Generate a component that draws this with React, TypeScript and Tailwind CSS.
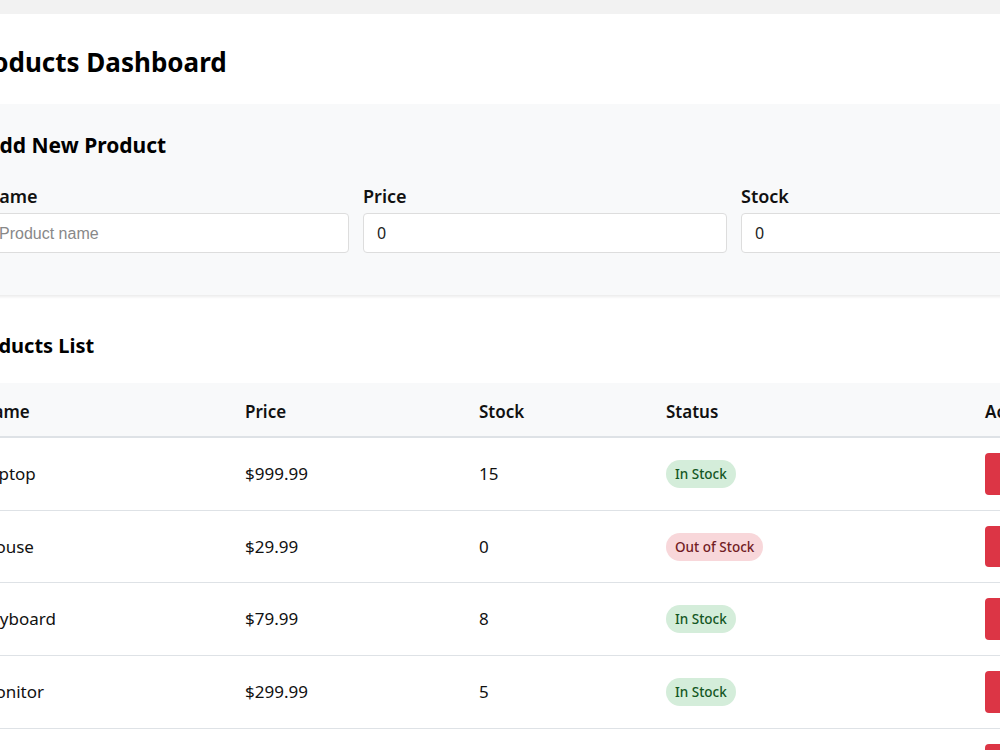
import React from 'react';

type Product = { name: string; price: number; stock: number };

const products: Product[] = [
  { name: 'Laptop', price: 999.99, stock: 15 },
  { name: 'Mouse', price: 29.99, stock: 0 },
  { name: 'Keyboard', price: 79.99, stock: 8 },
  { name: 'Monitor', price: 299.99, stock: 5 },
  { name: 'Headphones', price: 149.99, stock: 12 },
];

const font = { fontFamily: '"Segoe UI", "Noto Sans", "Open Sans", sans-serif' };

function Field({ label, placeholder, value }: { label: string; placeholder?: string; value?: string }) {
  return (
    <div className="flex flex-col">
      <label className="text-[18px] font-semibold leading-6 mb-[5px] text-[#111]">{label}</label>
      <input
        className="h-10 rounded border border-[#dddddd] bg-white px-[13px] text-base text-[#222] placeholder:text-[#888] placeholder:font-['Liberation_Sans',sans-serif] outline-none"
        placeholder={placeholder}
        defaultValue={value}
      />
    </div>
  );
}

export default function App() {
  return (
    <div className="w-[1000px] h-[750px] overflow-hidden bg-[#f2f2f2] pt-[14px]" style={font}>
      <div className="-ml-[55px] w-[1400px] bg-white px-5 pt-[31px] pb-10 text-[#111]">
        <h1 className="text-[26px] font-bold leading-[34px] text-black">Products Dashboard</h1>

        <div className="mt-[25px] bg-[#f8f9fa] rounded px-5 pt-[29px] pb-[42px] shadow-[0_2px_3px_rgba(0,0,0,0.08)]">
          <h2 className="text-[21px] font-bold leading-6 text-black">Add New Product</h2>
          <div className="mt-[27px] grid grid-cols-[364px_364px_364px_364px] gap-[14px]">
            <Field label="Name" placeholder="Product name" />
            <Field label="Price" value="0" />
            <Field label="Stock" value="0" />
            <Field label="Category" placeholder="Category" />
          </div>
        </div>

        <h2 className="mt-[37px] text-[20px] font-bold leading-7 text-black">Products List</h2>

        <table className="mt-[23px] table-fixed border-collapse text-[17px] w-[1200px]">
          <colgroup>
            <col className="w-[265px]" />
            <col className="w-[234px]" />
            <col className="w-[187px]" />
            <col className="w-[319px]" />
            <col />
          </colgroup>
          <thead>
            <tr className="bg-[#f8f9fa] border-b-2 border-[#dee2e6]">
              {['Name', 'Price', 'Stock', 'Status', 'Actions'].map(h => (
                <th key={h} className="text-left font-semibold px-[15px] pt-[17px] pb-[12px] leading-6">{h}</th>
              ))}
            </tr>
          </thead>
          <tbody>
            {products.map(p => (
              <tr key={p.name} className="border-b border-[#dee2e6]">
                <td className="px-[15px] py-[15px] leading-6">{p.name}</td>
                <td className="px-[15px] py-[15px] leading-6">${p.price.toFixed(2)}</td>
                <td className="px-[15px] py-[15px] leading-6">{p.stock}</td>
                <td className="px-[15px] py-[15px] leading-6">
                  {p.stock > 0 ? (
                    <span className="inline-block rounded-full bg-[#d4edda] text-[#155724] text-[13.5px] leading-5 font-medium px-[9px] py-1">In Stock</span>
                  ) : (
                    <span className="inline-block rounded-full bg-[#f8d7da] text-[#721c24] text-[13.5px] leading-5 font-medium px-[9px] py-1">Out of Stock</span>
                  )}
                </td>
                <td className="px-[15px] py-[15px] leading-6">
                  <button className="h-[41.7px] rounded bg-[#dc3545] px-4 text-white">Delete</button>
                </td>
              </tr>
            ))}
          </tbody>
        </table>
      </div>
    </div>
  );
}
